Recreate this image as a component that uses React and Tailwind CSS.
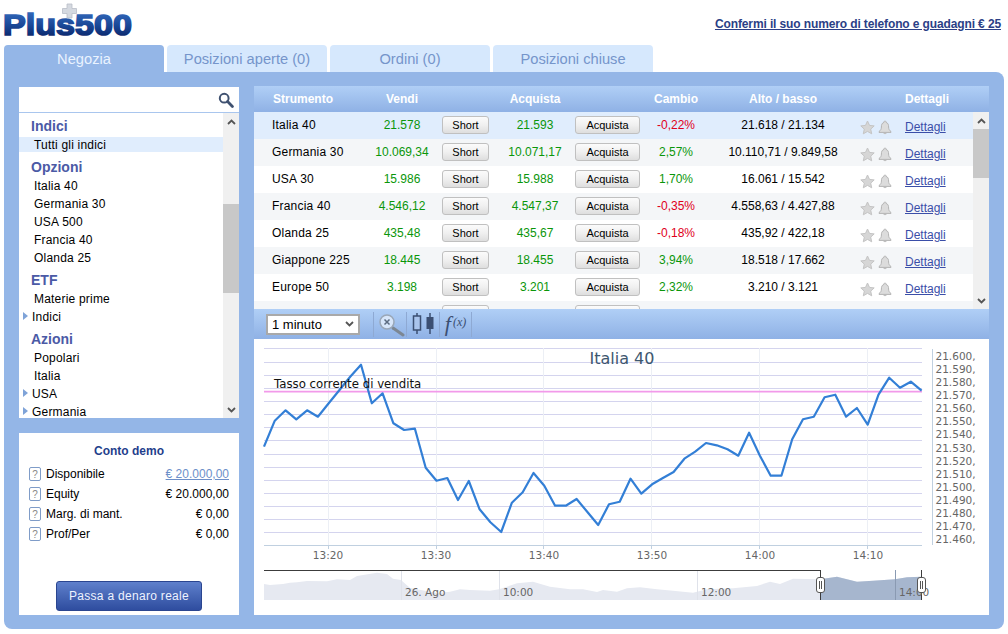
import React from 'react';

const rows = [
  ['Italia 40', '21.578', '21.593', '-0,22%', '21.618 / 21.134'],
  ['Germania 30', '10.069,34', '10.071,17', '2,57%', '10.110,71 / 9.849,58'],
  ['USA 30', '15.986', '15.988', '1,70%', '16.061 / 15.542'],
  ['Francia 40', '4.546,12', '4.547,37', '-0,35%', '4.558,63 / 4.427,88'],
  ['Olanda 25', '435,48', '435,67', '-0,18%', '435,92 / 422,18'],
  ['Giappone 225', '18.445', '18.455', '3,94%', '18.518 / 17.662'],
  ['Europe 50', '3.198', '3.201', '2,32%', '3.210 / 3.121'],
];

const lineY = [446.7,420.7,410.3,419.3,410.3,416.7,403.3,390,376.7,364.7,403.3,393.3,423.3,430,428.7,467.7,480.7,478,500,481,509.3,522.3,532,502.7,492.3,473,485.7,505.7,505.7,499,512,525,504.3,501.7,478.7,493.7,484.3,478,472,458.7,451.7,443,445.3,449.3,455.7,432.7,455.7,475.7,475.7,439.3,419.3,416.7,397.3,394.7,416.7,408,424.7,394.7,377.7,387.7,381.7,390.7];
const linePts = lineY.map((y, i) => `${(264 + i * 10.78).toFixed(1)},${y}`).join(' ');

const gridYs = [348.5,362.5,375.5,388.5,401.5,414.5,427.5,440.5,454.5,467.5,480.5,493.5,506.5,519.5,532.5];
const vGrid = [328.5,436.5,543.5,651.5,759.5,867.5];
const times = [[328,'13:20'],[436,'13:30'],[544,'13:40'],[652,'13:50'],[760,'14:00'],[868,'14:10']];
const axis = ['21.600,','21.590,','21.580,','21.570,','21.560,','21.550,','21.540,','21.530,','21.520,','21.510,','21.500,','21.490,','21.480,','21.470,','21.460,'];
const axisY = [360,373,386,399,412,425,438,452,465,478,491,504,517,530,543];

const navTop = [[264,584],[270,585],[283,584],[290,582.7],[297,582.3],[307,581],[327,581.3],[337,579.3],[350,580],[357,576],[377,572.7],[387,574],[393,578.7],[401,580],[410,588],[437,593],[450,591.7],[460,589.3],[470,590],[490,590.7],[499,589.3],[517,583.3],[533,581.7],[550,586.7],[570,589.3],[583,589.3],[597,592],[603,590],[617,591.7],[627,588.3],[640,587.3],[657,589.3],[673,590.7],[693,592.7],[707,589.3],[733,588.3],[757,586],[770,581.7],[780,584],[793,578.7],[820,579.3],[837,576.7],[857,581.7],[873,580.7],[895,579.3],[907,577.3],[922,576.7]];
const navAll = `264,600 ${navTop.map((p) => p.join(',')).join(' ')} 922,600`;
const navSel = `820,600 ${navTop.filter((p) => p[0] >= 820).map((p) => p.join(',')).join(' ')} 922,600`;

function Chev({ up, className }) {
  return (
    <svg width="9" height="6" viewBox="0 0 9 6" className={className}>
      <path d={up ? 'M1 5 L4.5 1.5 L8 5' : 'M1 1 L4.5 4.5 L8 1'} fill="none" stroke="#555" strokeWidth="1.8" />
    </svg>
  );
}

function Scrollbar({ before, thumb }) {
  return (
    <div className="flex h-full w-[16px] shrink-0 flex-col bg-[#f0f0f0]">
      <div className="flex h-[17px] items-center justify-center"><Chev up /></div>
      <div style={{ height: before }} />
      <div className="bg-[#c8c8c8]" style={{ height: thumb }} />
      <div className="flex-1" />
      <div className="flex h-[17px] items-center justify-center"><Chev /></div>
    </div>
  );
}

function Btn({ w, children }) {
  return (
    <div className={`mt-[4px] flex h-[18px] self-start ${w} items-center justify-center rounded-[3px] border border-[#c0c0c0] bg-gradient-to-b from-[#fbfbfb] via-[#f0f0f0] to-[#dedede] text-[11px] text-black`}>
      {children}
    </div>
  );
}

function Star() {
  return (
    <svg width="15" height="15" viewBox="0 0 15 15">
      <path d="M7.5 1 L9.5 5.4 L14.2 5.9 L10.7 9.1 L11.7 13.8 L7.5 11.4 L3.3 13.8 L4.3 9.1 L0.8 5.9 L5.5 5.4 Z" fill="#d6d6d6" stroke="#c4c4c4" />
    </svg>
  );
}

function Bell() {
  return (
    <svg width="14" height="15" viewBox="0 0 14 15">
      <path d="M7 1 C8 1 8 2 8 2.4 C10.2 3 10.6 5 10.6 7 C10.6 9.2 11.4 10.4 13 11.6 L13 12.4 L1 12.4 L1 11.6 C2.6 10.4 3.4 9.2 3.4 7 C3.4 5 3.8 3 6 2.4 C6 2 6 1 7 1 Z" fill="#dcdcdc" stroke="#b4b4b4" />
      <path d="M5.4 13 C5.6 14.6 8.4 14.6 8.6 13 Z" fill="#c0c0c0" />
    </svg>
  );
}

function Logo() {
  return (
    <svg width="136" height="38" viewBox="0 0 136 38" className="block overflow-visible">
      <defs>
        <linearGradient id="lg" gradientUnits="userSpaceOnUse" x1="0" y1="12" x2="0" y2="35">
          <stop offset="0" stopColor="#2f66b8" />
          <stop offset="0.55" stopColor="#1a4796" />
          <stop offset="1" stopColor="#0b2a70" />
        </linearGradient>
      </defs>
      <text x="0" y="34.2" fontFamily="Liberation Sans" fontWeight="700" fontSize="30" fill="url(#lg)" stroke="url(#lg)" strokeWidth="1.6" textLength="129" lengthAdjust="spacingAndGlyphs">Plus500</text>
      <path d="M59.5 7.5 h4.5 v-4.5 h5 v4.5 h4.5 v5 h-4.5 v4.5 h-5 v-4.5 h-4.5 Z" fill="#d5d9e0" stroke="#b9bec8" strokeWidth="0.8" />
    </svg>
  );
}

function Chart() {
  return (
    <svg width="735" height="276" viewBox="254 339 735 276" className="block bg-white">
      {gridYs.map((y) => <line key={y} x1="264" x2="922" y1={y} y2={y} stroke="#d4d4ee" strokeWidth="1" />)}
      {vGrid.map((x) => <line key={x} x1={x} x2={x} y1="348" y2="545" stroke="#eceff5" strokeWidth="1" />)}
      <line x1="264" x2="922" y1="545.5" y2="545.5" stroke="#c0d0e0" />
      {vGrid.map((x) => <line key={x} x1={x} x2={x} y1="545" y2="549" stroke="#c0d0e0" />)}
      <line x1="264" x2="922" y1="391.7" y2="391.7" stroke="#f29aea" strokeWidth="1.7" />
      <polyline points={linePts} fill="none" stroke="#337fd6" strokeWidth="2.2" strokeLinejoin="round" />
      <text x="622" y="364" textAnchor="middle" fontFamily="DejaVu Sans" fontSize="16" fill="#3e576f">Italia 40</text>
      <text x="274" y="388" fontFamily="DejaVu Sans" fontSize="11.75" fill="#111">Tasso corrente di vendita</text>
      <line x1="932.5" x2="932.5" y1="349" y2="545" stroke="#c0d0e0" />
      {axis.map((t, i) => <text key={t} x="935.5" y={axisY[i]} fontFamily="DejaVu Sans" fontSize="10.5" fill="#666">{t}</text>)}
      {times.map(([x, t]) => <text key={t} x={x} y="559" textAnchor="middle" fontFamily="DejaVu Sans" fontSize="10.5" fill="#666">{t}</text>)}
      <polygon points={navAll} fill="#e6e9f1" />
      <polygon points={navSel} fill="#a6b6ce" />
      {[401.5,499.5,697.5].map((x) => <line key={x} x1={x} x2={x} y1="571" y2="600" stroke="#dfe2ea" />)}
      <line x1="895.5" x2="895.5" y1="570" y2="600" stroke="#8a9ab2" />
      <line x1="264" x2="820.5" y1="570.5" y2="570.5" stroke="#3c3c3c" />
      <line x1="820.5" x2="820.5" y1="570" y2="600" stroke="#3c3c3c" />
      <line x1="921.5" x2="921.5" y1="570" y2="600" stroke="#3c3c3c" />
      <text x="405" y="596" fontFamily="DejaVu Sans" fontSize="10.5" fill="#666">26. Ago</text>
      <text x="503" y="596" fontFamily="DejaVu Sans" fontSize="10.5" fill="#666">10:00</text>
      <text x="701" y="596" fontFamily="DejaVu Sans" fontSize="10.5" fill="#666">12:00</text>
      <text x="899" y="596" fontFamily="DejaVu Sans" fontSize="10.5" fill="#666">14:00</text>
      {[816.5, 917.5].map((x) => (
        <g key={x}>
          <rect x={x} y="577.5" width="8" height="15" rx="2.5" fill="#fff" stroke="#555" />
          <line x1={x + 3} x2={x + 3} y1="581" y2="589" stroke="#555" />
          <line x1={x + 5} x2={x + 5} y1="581" y2="589" stroke="#555" />
        </g>
      ))}
    </svg>
  );
}

function Item({ arrow, active, children }) {
  return (
    <div className="flex h-[18px] items-center text-[12px] tracking-[0.2px] text-black">
      {active ? (
        <div className="flex h-[15px] w-full items-center bg-[#e0edfd] pl-[15px]"><span className="pt-[1px]">{children}</span></div>
      ) : arrow ? (
        <div className="flex items-center pl-[4px]">
          <span className="mr-[4px] h-0 w-0 border-y-[4px] border-l-[5px] border-y-transparent border-l-[#7fa3d8]" />
          <span className="pt-[2px]">{children}</span>
        </div>
      ) : (
        <div className="pl-[15px] pt-[2px]">{children}</div>
      )}
    </div>
  );
}

function Head({ children }) {
  return <div className="flex h-[18px] items-center pl-[12px] text-[14px] font-bold text-[#4b5aa6]">{children}</div>;
}

function Help() {
  return <span className="flex h-[14px] w-[12px] items-center justify-center rounded-[2px] border border-[#7f9cc8] text-[10px] text-[#8a8a8a]">?</span>;
}

function Stat({ label, value, link }) {
  return (
    <div className="flex h-[20px] items-center justify-between">
      <div className="flex items-center gap-[5px]">
        <Help />
        <span>{label}</span>
      </div>
      <span className={link ? 'text-[#6c8fc9] underline' : ''}>{value}</span>
    </div>
  );
}

const cols = 'grid grid-cols-[108px_80px_47px_86px_65px_72px_142px_1fr] items-center';

export default function App() {
  return (
    <div className="h-[634px] w-[1008px] overflow-hidden bg-white font-['Liberation_Sans',sans-serif]">
      <div className="flex h-[45px] items-start justify-between pl-[3px] pr-[7px]">
        <div className="pt-[1px]"><Logo /></div>
        <a className="pt-[15px] text-[12px] font-bold tracking-[-0.12px] text-[#2b3f86] underline">Confermi il suo numero di telefono e guadagni € 25</a>
      </div>

      <div className="ml-[4px] flex h-[27px] gap-[3px] text-[14.67px]">
        <div className="flex w-[160px] items-center justify-center rounded-t-[4px] bg-[#94b6e7] pt-[1px] text-[#eaf3ff]">Negozia</div>
        {['Posizioni aperte (0)', 'Ordini (0)', 'Posizioni chiuse'].map((t) => (
          <div key={t} className="flex w-[160px] items-center justify-center rounded-t-[4px] bg-[#d6e8fd] pt-[1px] text-[#7595cb]">{t}</div>
        ))}
      </div>

      <div className="ml-[4px] flex h-[557px] w-[1000px] gap-[15px] rounded-tr-[8px] rounded-b-[8px] bg-[#94b6e7] px-[15px] pb-[14px] pt-[14px]">
        <div className="mt-[1px] flex w-[220px] shrink-0 flex-col">
          <div className="flex h-[25px] items-center justify-end bg-white pr-[5px]">
            <svg width="16" height="16" viewBox="0 0 16 16">
              <circle cx="6.2" cy="6.2" r="4.4" fill="none" stroke="#3f5170" strokeWidth="2" />
              <path d="M9.6 9.6 L14.4 14.4" stroke="#3f5170" strokeWidth="2.8" strokeLinecap="round" />
            </svg>
          </div>
          <div className="h-[1px] bg-[#a9c6ee]" />
          <div className="flex h-[305px] overflow-hidden bg-white">
            <div className="flex-1 overflow-hidden pt-[4px]">
              <Head>Indici</Head>
              <Item active>Tutti gli indici</Item>
              <div className="h-[5px]" />
              <Head>Opzioni</Head>
              <Item>Italia 40</Item>
              <Item>Germania 30</Item>
              <Item>USA 500</Item>
              <Item>Francia 40</Item>
              <Item>Olanda 25</Item>
              <div className="h-[5px]" />
              <Head>ETF</Head>
              <Item>Materie prime</Item>
              <Item arrow>Indici</Item>
              <div className="h-[5px]" />
              <Head>Azioni</Head>
              <Item>Popolari</Item>
              <Item>Italia</Item>
              <Item arrow>USA</Item>
              <Item arrow>Germania</Item>
            </div>
            <Scrollbar before={74} thumb={89} />
          </div>
          <div className="mt-[15px] flex h-[182px] flex-col bg-white px-[10px] text-[12px] text-black">
            <div className="pt-[9px] text-center font-bold text-[#1f3f8c]">Conto demo</div>
            <div className="mt-[4px]">
              <Stat label="Disponibile" value="€ 20.000,00" link />
              <Stat label="Equity" value="€ 20.000,00" />
              <Stat label="Marg. di mant." value="€ 0,00" />
              <Stat label="Prof/Per" value="€ 0,00" />
            </div>
            <div className="flex-1" />
            <div className="flex justify-center pb-[4px]">
              <div className="flex h-[30px] w-[146px] items-center justify-center rounded-[3px] border border-[#2a4590] bg-gradient-to-b from-[#5f80cc] to-[#2f4d9f] text-[12px] tracking-[0.3px] text-[#eef3ff]">Passa a denaro reale</div>
            </div>
          </div>
        </div>

        <div className="flex w-[735px] shrink-0 flex-col">
          <div className={`${cols} h-[26px] bg-gradient-to-b from-[#b0cff6] to-[#8fb1e5] text-[12px] font-bold text-white`}>
            <div className="pl-[19px]">Strumento</div>
            <div className="text-center">Vendi</div>
            <div />
            <div className="pl-[6px] text-center">Acquista</div>
            <div />
            <div className="text-center">Cambio</div>
            <div className="text-center">Alto / basso</div>
            <div className="pl-[51px]">Dettagli</div>
          </div>
          <div className="flex h-[197px] overflow-hidden bg-white">
            <div className="flex-1 overflow-hidden">
              {rows.map((r, i) => (
                <div key={r[0]} className={`${cols} h-[27px] text-[12px] ${i === 0 ? 'bg-[#e0edfd]' : i % 2 ? 'bg-[#f4f6f8]' : 'bg-white'}`}>
                  <div className="pb-[2px] pl-[18px] tracking-[0.2px] text-black">{r[0]}</div>
                  <div className="pb-[2px] text-center text-[#0a960a]">{r[1]}</div>
                  <Btn w="w-[47px]">Short</Btn>
                  <div className="pb-[2px] pl-[6px] text-center text-[#0a960a]">{r[2]}</div>
                  <Btn w="w-[65px]">Acquista</Btn>
                  <div className={`pb-[2px] text-center ${r[3].startsWith('-') ? 'text-[#e0001a]' : 'text-[#0a960a]'}`}>{r[3]}</div>
                  <div className="pb-[2px] text-center text-black">{r[4]}</div>
                  <div className="flex items-center pl-[6px] pt-[3px]">
                    <Star />
                    <span className="ml-[3px]"><Bell /></span>
                    <span className="ml-[13px] text-[#3a4ea8] underline">Dettagli</span>
                  </div>
                </div>
              ))}
              <div className={`${cols} h-[27px] bg-[#f4f6f8]`}>
                <div /><div />
                <Btn w="w-[47px]" />
                <div />
                <Btn w="w-[65px]" />
              </div>
            </div>
            <Scrollbar before={0} thumb={49} />
          </div>
          <div className="flex h-[30px] items-center bg-gradient-to-b from-[#b0cff6] to-[#8fb1e5]">
            <div className="ml-[12px] flex h-[21px] w-[94px] items-center justify-between border-2 border-[#a9a9a9] bg-white pl-[4px] pr-[4px] text-[13px] text-black">
              <span className="pt-[1px]">1 minuto</span>
              <Chev />
            </div>
            <div className="ml-[13px] flex h-[25px] w-[33px] items-center justify-center border-l border-[#8ea9d3]">
              <svg width="30" height="26" viewBox="0 0 30 26">
                <path d="M18 17 L28 24" stroke="#7c8794" strokeWidth="3" strokeLinecap="round" />
                <circle cx="12" cy="11" r="7" fill="#d7e6fa" stroke="#9aa7b8" strokeWidth="1.5" />
                <path d="M9.5 8.5 L14.5 13.5 M14.5 8.5 L9.5 13.5" stroke="#5b6b80" strokeWidth="1.5" />
              </svg>
            </div>
            <div className="flex h-[25px] w-[33px] items-center justify-center border-l border-[#8ea9d3]">
              <svg width="26" height="24" viewBox="0 0 26 24">
                <path d="M7 1 V22 M20 1 V22" stroke="#3b4f72" strokeWidth="1.5" />
                <rect x="3.5" y="4" width="7" height="14" fill="#a9c4ec" stroke="#3b4f72" strokeWidth="1.5" />
                <rect x="16.5" y="5" width="7" height="12" fill="#3b4f72" />
              </svg>
            </div>
            <div className="flex h-[25px] w-[33px] items-center justify-center border-x border-[#8ea9d3] font-['Liberation_Serif',serif] italic text-[#3b4f72]">
              <span className="text-[22px] leading-none">f</span>
              <span className="ml-[2px] pb-[5px] text-[12px] leading-none">(x)</span>
            </div>
          </div>
          <Chart />
        </div>
      </div>
    </div>
  );
}
